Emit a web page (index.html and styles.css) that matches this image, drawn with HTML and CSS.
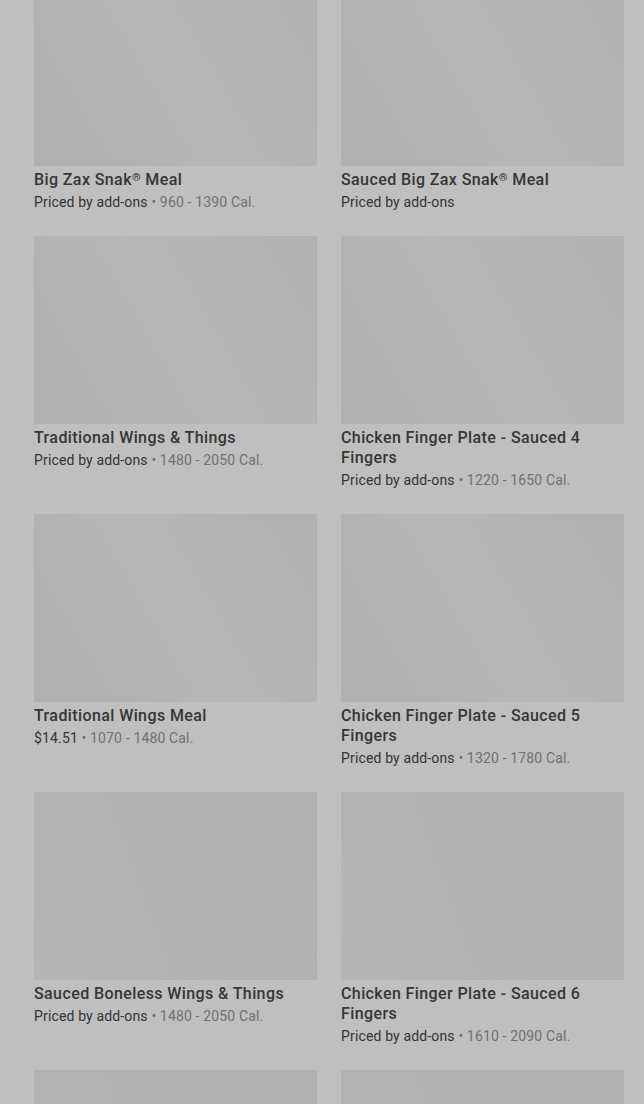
FILE: index.html
```html
<!DOCTYPE html>
<html lang="en">
<head>
  <meta charset="UTF-8" />
  <meta name="viewport" content="width=device-width, initial-scale=1" />
  <title>Menu</title>
  <link rel="stylesheet" href="styles.css">
</head>
<body>
  <main class="menu-grid">
    <div class="item">
      <div class="thumb"></div>
      <h3 class="item-title">Big Zax Snak<span class="reg">®</span> Meal</h3>
      <p class="item-meta">Priced by add-ons <span class="cal">• 960 - 1390 Cal.</span></p>
    </div>
    <div class="item">
      <div class="thumb"></div>
      <h3 class="item-title">Sauced Big Zax Snak<span class="reg">®</span> Meal</h3>
      <p class="item-meta">Priced by add-ons</p>
    </div>

    <div class="item">
      <div class="thumb"></div>
      <h3 class="item-title">Traditional Wings &amp; Things</h3>
      <p class="item-meta">Priced by add-ons <span class="cal">• 1480 - 2050 Cal.</span></p>
    </div>
    <div class="item">
      <div class="thumb"></div>
      <h3 class="item-title">Chicken Finger Plate - Sauced 4 Fingers</h3>
      <p class="item-meta">Priced by add-ons <span class="cal">• 1220 - 1650 Cal.</span></p>
    </div>

    <div class="item">
      <div class="thumb"></div>
      <h3 class="item-title">Traditional Wings Meal</h3>
      <p class="item-meta">$14.51 <span class="cal">• 1070 - 1480 Cal.</span></p>
    </div>
    <div class="item">
      <div class="thumb"></div>
      <h3 class="item-title">Chicken Finger Plate - Sauced 5 Fingers</h3>
      <p class="item-meta">Priced by add-ons <span class="cal">• 1320 - 1780 Cal.</span></p>
    </div>

    <div class="item">
      <div class="thumb thumb-soft"></div>
      <h3 class="item-title">Sauced Boneless Wings &amp; Things</h3>
      <p class="item-meta">Priced by add-ons <span class="cal">• 1480 - 2050 Cal.</span></p>
    </div>
    <div class="item">
      <div class="thumb thumb-soft"></div>
      <h3 class="item-title">Chicken Finger Plate - Sauced 6 Fingers</h3>
      <p class="item-meta">Priced by add-ons <span class="cal">• 1610 - 2090 Cal.</span></p>
    </div>

    <div class="item">
      <div class="thumb thumb-soft"></div>
    </div>
    <div class="item">
      <div class="thumb thumb-soft"></div>
    </div>
  </main>
</body>
</html>
```

FILE: styles.css
```css
body {
  margin: 0;
  background-color: #bfbfbf;
  font-family: Roboto, 'Noto Sans', sans-serif;
  color: #333333;
  overflow: hidden;
}

.menu-grid {
  display: grid;
  grid-template-columns: 283px 283px;
  column-gap: 24px;
  row-gap: 24px;
  padding: 0 20px 0 34px;
  margin-top: -22px;
}

.item {
  display: flex;
  flex-direction: column;
}

.thumb {
  height: 188px;
  background: linear-gradient(60deg, #b0b0b0 0%, #b2b2b2 25%, #b7b7b7 50%, #b3b3b3 75%, #b0b0b0 100%);
}

.thumb-soft {
  background: linear-gradient(70deg, #b5b5b5 0%, #b2b2b2 30%, #b1b1b1 60%, #b0b0b0 100%);
}

.item-title {
  margin: 4px 0 0;
  font-size: 16px;
  line-height: 20px;
  font-weight: 500;
  letter-spacing: 0.4px;
  color: #363636;
}

.reg {
  font-size: 11px;
  vertical-align: 4px;
  line-height: 0;
}

.item-meta {
  margin: 2px 0 0;
  font-size: 14px;
  line-height: 20px;
  letter-spacing: 0.15px;
  color: #333333;
}

.cal {
  color: #707070;
}
```
